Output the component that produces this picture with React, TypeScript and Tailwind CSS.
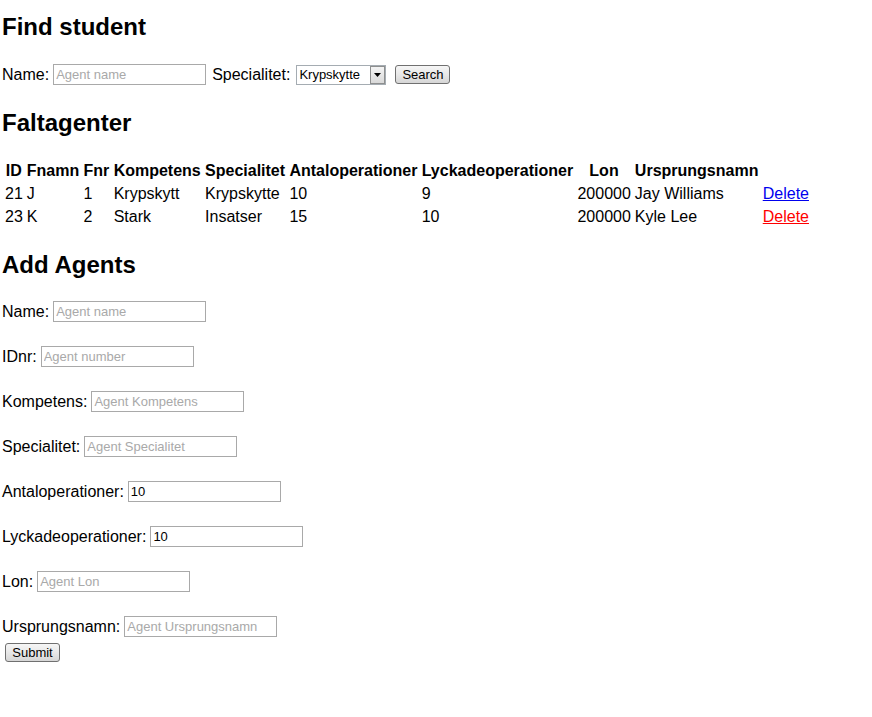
import React, { useState } from 'react';

type Agent = {
  id: number;
  fnamn: string;
  fnr: number;
  kompetens: string;
  specialitet: string;
  antal: number;
  lyckade: number;
  lon: number;
  ursprung: string;
};

const AGENTS: Agent[] = [
  { id: 21, fnamn: 'J', fnr: 1, kompetens: 'Krypskytt', specialitet: 'Krypskytte', antal: 10, lyckade: 9, lon: 200000, ursprung: 'Jay Williams' },
  { id: 23, fnamn: 'K', fnr: 2, kompetens: 'Stark', specialitet: 'Insatser', antal: 15, lyckade: 10, lon: 200000, ursprung: 'Kyle Lee' },
];

const HEADERS = ['ID', 'Fnamn', 'Fnr', 'Kompetens', 'Specialitet', 'Antaloperationer', 'Lyckadeoperationer', 'Lon', 'Ursprungsnamn', ''];

const FIELDS = [
  { label: 'Name:', placeholder: 'Agent name', value: '' },
  { label: 'IDnr:', placeholder: 'Agent number', value: '' },
  { label: 'Kompetens:', placeholder: 'Agent Kompetens', value: '' },
  { label: 'Specialitet:', placeholder: 'Agent Specialitet', value: '' },
  { label: 'Antaloperationer:', placeholder: '', value: '10' },
  { label: 'Lyckadeoperationer:', placeholder: '', value: '10' },
  { label: 'Lon:', placeholder: 'Agent Lon', value: '' },
  { label: 'Ursprungsnamn:', placeholder: 'Agent Ursprungsnamn', value: '' },
];

const inputCls =
  'w-[153px] h-[21px] border border-[#a9a9a9] bg-white px-[2px] text-[13px] text-black outline-none placeholder:text-[#a9a9a9]';

const btnCls =
  'h-[19px] px-[6px] border border-[#707070] rounded-[3px] bg-gradient-to-b from-[#f6f6f6] via-[#e8e8e8] to-[#d6d6d6] text-[13px] leading-[15px] text-black';

const Heading: React.FC<{ children: React.ReactNode; className?: string }> = ({ children, className }) => (
  <h2 className={`text-[24px] font-bold leading-[28px] text-black ${className ?? ''}`}>{children}</h2>
);

export default function App() {
  const [name, setName] = useState('');
  const [spec, setSpec] = useState('Krypskytte');
  const [form, setForm] = useState(FIELDS.map(f => f.value));

  return (
    <div
      className="min-h-[717px] bg-white pl-[2px] text-[16px] text-black"
      style={{ fontFamily: '"Liberation Sans", Arial, sans-serif' }}
    >
      <Heading className="pt-[13px]">Find student</Heading>

      <div className="mt-[23px] flex items-center h-[21px]">
        <span>Name:</span>
        <input
          className={`${inputCls} ml-[4px]`}
          placeholder="Agent name"
          value={name}
          onChange={e => setName(e.target.value)}
        />
        <span className="ml-[6px]">Specialitet:</span>
        <div className="relative ml-[6px] w-[90px] h-[20px]">
          <select
            className="appearance-none block w-full h-full border border-[#a5acb2] bg-white pl-[2px] py-0 text-[13px] leading-[16px] text-black outline-none"
            value={spec}
            onChange={e => setSpec(e.target.value)}
          >
            <option>Krypskytte</option>
            <option>Insatser</option>
          </select>
          <span className="pointer-events-none absolute right-[1px] top-[1px] flex h-[18px] w-[15px] items-center justify-center border border-[#8e8f8f] bg-gradient-to-b from-[#f4f4f4] to-[#d9d9d9]">
            <svg width="7" height="4" viewBox="0 0 7 4">
              <path d="M0 0h7L3.5 4z" fill="#000" />
            </svg>
          </span>
        </div>
        <button className={`${btnCls} ml-[9px] w-[55px]`}>Search</button>
      </div>

      <Heading className="mt-[24px]">Faltagenter</Heading>

      <table className="mt-[21px] border-separate border-spacing-[2px] leading-[19px]">
        <thead>
          <tr>
            {HEADERS.map((h, i) => (
              <th key={i} className="py-[1px] pl-[1px] pr-[1.3px] font-bold text-center">{h}</th>
            ))}
          </tr>
        </thead>
        <tbody>
          {AGENTS.map((a, i) => (
            <tr key={a.id}>
              <td className="p-[1px]">{a.id}</td>
              <td className="p-[1px]">{a.fnamn}</td>
              <td className="p-[1px]">{a.fnr}</td>
              <td className="p-[1px]">{a.kompetens}</td>
              <td className="p-[1px]">{a.specialitet}</td>
              <td className="p-[1px]">{a.antal}</td>
              <td className="p-[1px]">{a.lyckade}</td>
              <td className="p-[1px]">{a.lon}</td>
              <td className="p-[1px]">{a.ursprung}</td>
              <td className="p-[1px]">
                <a href="#" className={`underline ${i === 0 ? 'text-[#0000ee]' : 'text-[#ff0000]'}`}>Delete</a>
              </td>
            </tr>
          ))}
        </tbody>
      </table>

      <Heading className="mt-[22px]">Add Agents</Heading>

      <form className="mt-[22px]" onSubmit={e => e.preventDefault()}>
        {FIELDS.map((f, i) => (
          <div key={f.label} className={`flex items-center h-[21px] ${i < FIELDS.length - 1 ? 'mb-[24px]' : ''}`}>
            <span>{f.label}</span>
            <input
              className={`${inputCls} ml-[4px]`}
              placeholder={f.placeholder}
              value={form[i]}
              onChange={e => setForm(prev => prev.map((v, j) => (j === i ? e.target.value : v)))}
            />
          </div>
        ))}
        <button type="submit" className={`${btnCls} mt-[6px] ml-[3px] w-[55px]`}>Submit</button>
      </form>
    </div>
  );
}
